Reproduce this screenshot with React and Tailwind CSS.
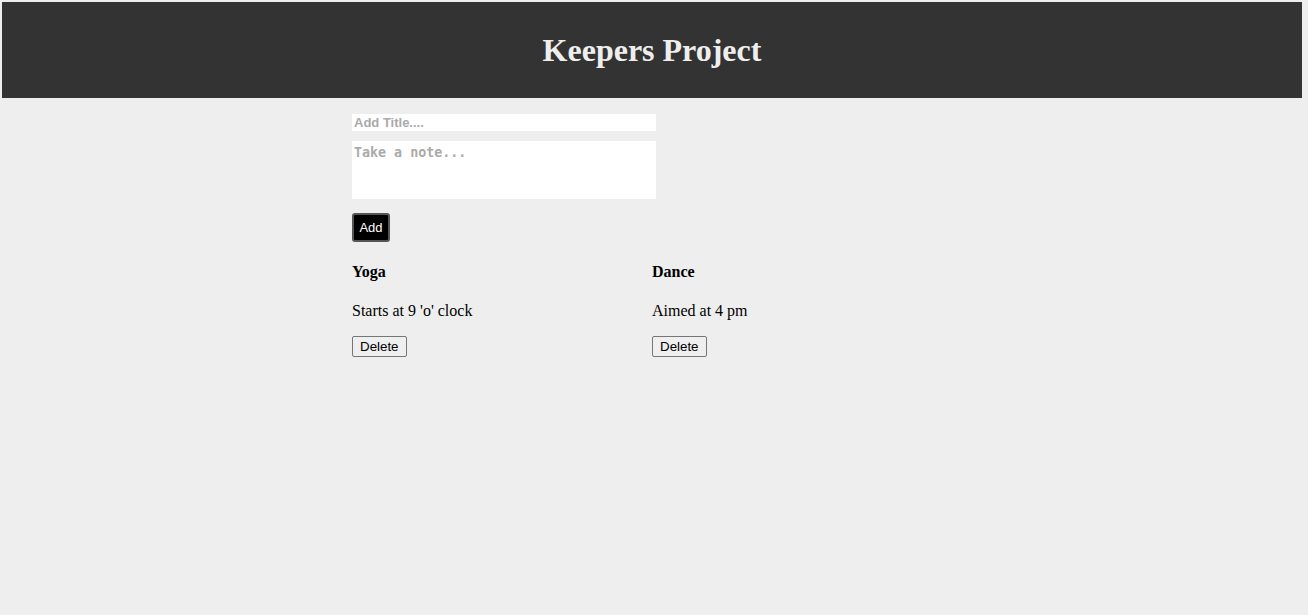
import React, { useState } from 'react';

const initialNotes = [
  { id: 1, title: 'Yoga', content: "Starts at 9 'o' clock" },
  { id: 2, title: 'Dance', content: 'Aimed at 4 pm' },
];

const App = () => {
  const [notes, setNotes] = useState(initialNotes);
  const [title, setTitle] = useState('');
  const [content, setContent] = useState('');

  const addNote = () => {
    if (!title && !content) return;
    setNotes([...notes, { id: Date.now(), title, content }]);
    setTitle('');
    setContent('');
  };

  const deleteNote = (id) => setNotes(notes.filter((n) => n.id !== id));

  return (
    <div className="min-h-[615px] bg-[#eeeeee] pt-[2px] font-['Liberation_Serif',serif] text-black">
      <header className="ml-[2px] flex h-[96px] w-[1300px] items-center justify-center bg-[#333333]">
        <h1 className="text-[32px] font-bold text-[#eeeeee]">Keepers Project</h1>
      </header>

      <div className="mx-auto w-[604px] pt-[16px]">
        <input
          value={title}
          onChange={(e) => setTitle(e.target.value)}
          placeholder="Add Title...."
          className="block h-[17px] w-[304px] bg-white px-[2px] font-['Liberation_Sans',sans-serif] text-[13px] font-bold outline-none placeholder:text-[#aaaaaa]"
        />
        <textarea
          value={content}
          onChange={(e) => setContent(e.target.value)}
          placeholder="Take a note..."
          className="mt-[10px] block h-[58px] w-[304px] resize-none bg-white px-[2px] py-[2px] font-['DejaVu_Sans_Mono',monospace] text-[13.33px] font-bold outline-none placeholder:text-[#aaaaaa]"
        />
        <button
          onClick={addNote}
          className="mt-[14px] block h-[29px] w-[38px] rounded-[3px] border-2 border-[#555555] bg-black font-['Liberation_Sans',sans-serif] text-[13px] text-white"
        >
          Add
        </button>

        <div className="mt-[21px] flex flex-wrap">
          {notes.map((note) => (
            <div key={note.id} className="w-[300px]">
              <h3 className="text-[16px] font-bold leading-[18px]">{note.title}</h3>
              <p className="mt-[21px] text-[16px] leading-[18px]">{note.content}</p>
              <button
                onClick={() => deleteNote(note.id)}
                className="mt-[16px] h-[21px] rounded-[2px] border border-[#767676] bg-[#efefef] px-[7px] font-['Liberation_Sans',sans-serif] text-[13.33px] leading-[15px]"
              >
                Delete
              </button>
            </div>
          ))}
        </div>
      </div>
    </div>
  );
};

export default App;
